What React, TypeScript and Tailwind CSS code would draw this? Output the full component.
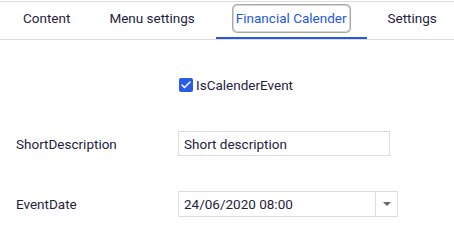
import { Check } from "lucide-react";

const tabs = ["Content", "Menu settings", "Financial Calender", "Settings"];

export default function App() {
  const active = "Financial Calender";

  return (
    <div className="h-[232px] w-[454px] overflow-hidden bg-white text-[13.5px] text-[#1f2340]" style={{ fontFamily: "Roboto, 'Liberation Sans', sans-serif" }}>
      {/* Tabs */}
      <div className="mt-px flex h-[39px] border-y border-[#dcdcdc] pl-[5px]">
        {tabs.map((tab) => (
          <div
            key={tab}
            className={`mr-[3px] flex h-full shrink-0 items-center whitespace-nowrap px-[18px] pb-[2px] ${tab === active ? "border-b-2 border-[#2557e6] text-[#2557e6]" : "border-b-2 border-transparent"}`}
          >
            {tab === active ? (
              <span className="rounded-[3px] px-[2px] py-[2px] shadow-[0_0_0_1px_#d6d6d6,0_0_0_2px_#a8a8a8]">{tab}</span>
            ) : (
              <span>{tab}</span>
            )}
          </div>
        ))}
      </div>

      {/* Form */}
      <div className="pt-[35px]">
        <div className="flex items-center pl-[179px]">
          <span className="flex h-[14px] w-[14px] items-center justify-center rounded-[2px] bg-[#2a5be4]">
            <Check className="h-[12px] w-[12px] text-white" strokeWidth={3} />
          </span>
          <span className="ml-[3px]">IsCalenderEvent</span>
        </div>

        <div className="mt-[36px] flex items-center">
          <label className="w-[178px] pl-[16px]">ShortDescription</label>
          <div className="flex h-[25px] w-[212px] items-center border border-[#dcdcdc] px-[5px]">Short description</div>
        </div>

        <div className="mt-[35px] flex items-center">
          <label className="w-[178px] pl-[16px]">EventDate</label>
          <div className="flex h-[26px] w-[220px] items-center border border-[#dcdcdc]">
            <span className="flex-1 px-[5px]">24/06/2020 08:00</span>
            <span className="flex h-full w-[22px] items-center justify-center border-l border-[#dcdcdc]">
              <svg width="8" height="4" viewBox="0 0 8 4">
                <path d="M0 0h8L4 4z" fill="#666" />
              </svg>
            </span>
          </div>
        </div>
      </div>
    </div>
  );
}
